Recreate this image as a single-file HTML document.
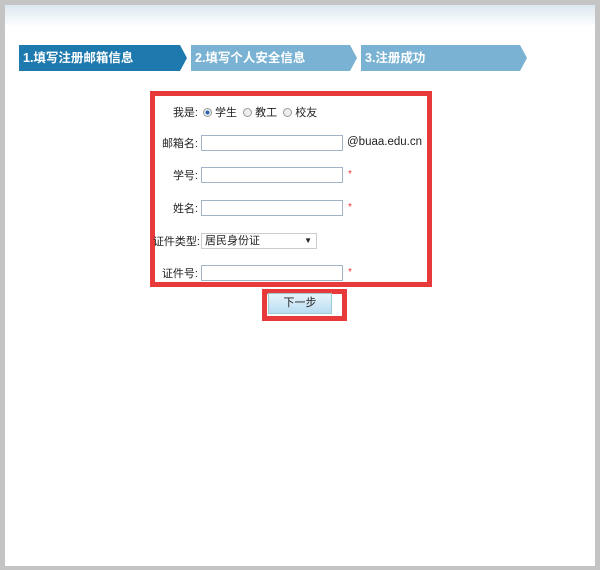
<!DOCTYPE html>
<html><head><meta charset="utf-8"><style>
body{margin:0;width:600px;height:570px;background:#c4c4c4;position:relative;overflow:hidden;font-family:"Liberation Sans","Noto Sans CJK SC",sans-serif;font-size:11px;color:#222}
#pg{position:absolute;left:5px;top:5px;width:590px;height:561px;background:#fff}
#hd{position:absolute;left:0;top:0;width:590px;height:22px;background:linear-gradient(#dbe7ee,#fff)}
.tab{position:absolute;top:40px;height:26px;line-height:27px;color:#fff;font-weight:bold;font-size:12.5px;padding-left:4px;box-sizing:border-box}
.tab:after{content:"";position:absolute;right:-7px;top:0;border-left:7px solid;border-left-color:inherit;border-top:13px solid transparent;border-bottom:13px solid transparent}
.a{background:#1e7aae;border-color:#1e7aae}.b{background:#79b2d3;border-color:#79b2d3}
.rb{position:absolute;border:5px solid #e83a3a}
.lb{position:absolute;right:397px;text-align:right;white-space:nowrap}
.in{position:absolute;left:196px;width:142px;height:16px;border:1px solid #9fb4c6;box-sizing:border-box;background:#fff}
.st{position:absolute;left:343px;color:#e33;font-size:10px}
.rd{display:inline-block;width:9px;height:9px;border-radius:50%;border:1px solid #999;background:#eee;vertical-align:-1px;margin-right:3px;box-sizing:border-box}
</style></head><body><div id="pg">
<div id="hd"></div>
<div class="tab a" style="left:14px;width:161px">1.填写注册邮箱信息</div>
<div class="tab b" style="left:186px;width:159px">2.填写个人安全信息</div>
<div class="tab b" style="left:356px;width:159px">3.注册成功</div>
<div class="rb" style="left:145px;top:86px;width:272px;height:186px"></div>
<div class="rb" style="left:257px;top:284px;width:75px;height:22px"></div>
<div class="lb" style="top:99px">我是:</div>
<div style="position:absolute;left:198px;top:99px;white-space:nowrap"><span class="rd" style="background:radial-gradient(#2a62b0 35%,#eee 45%)"></span>学生 &nbsp;<span class="rd"></span>教工 &nbsp;<span class="rd"></span>校友</div>
<div class="lb" style="top:130px">邮箱名:</div><div class="in" style="top:130px"></div>
<div style="position:absolute;left:342px;top:131px;font-size:11.5px">@buaa.edu.cn</div>
<div class="lb" style="top:162px">学号:</div><div class="in" style="top:162px"></div><div class="st" style="top:164px">*</div>
<div class="lb" style="top:195px">姓名:</div><div class="in" style="top:195px"></div><div class="st" style="top:197px">*</div>
<div class="lb" style="top:228px;right:395px">证件类型:</div>
<div style="position:absolute;left:196px;top:228px;width:116px;height:16px;border:1px solid #ccc;box-sizing:border-box;line-height:14px;padding-left:3px">居民身份证<span style="position:absolute;right:4px;top:0;font-size:8px">▼</span></div>
<div class="lb" style="top:260px">证件号:</div><div class="in" style="top:260px"></div><div class="st" style="top:262px">*</div>
<div style="position:absolute;left:263px;top:288px;width:64px;height:21px;background:linear-gradient(#e6f3fb,#b9ddf2);border:1px solid #9cc;box-sizing:border-box;text-align:center;line-height:19px">下一步</div>
</div></body></html>
